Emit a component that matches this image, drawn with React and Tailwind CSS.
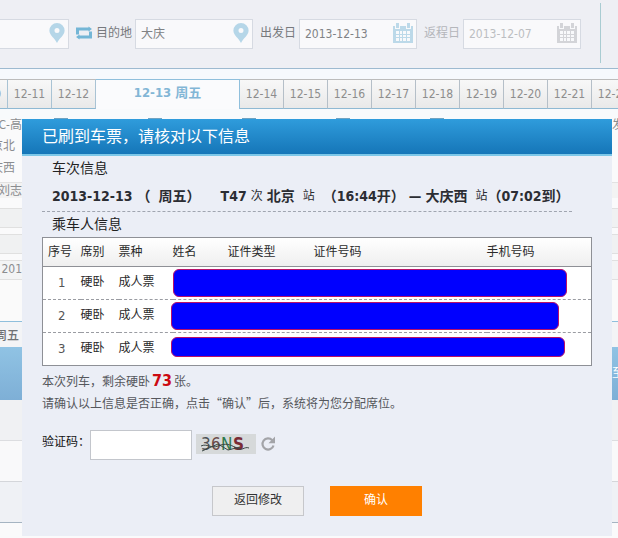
import React from 'react'

const days = ['12-14', '12-15', '12-16', '12-17', '12-18', '12-19', '12-20', '12-21', '12-22']

const passengers = [
  { no: 1, seat: '硬卧', type: '成人票', bar: 'h-7 mr-6' },
  { no: 2, seat: '硬卧', type: '成人票', bar: 'h-7 mr-8 -ml-0.5' },
  { no: 3, seat: '硬卧', type: '成人票', bar: 'h-5 mr-[26px] -ml-0.5 mb-1' },
]

const PinIcon = () => (
  <svg className="mt-[3px] h-5 w-4 shrink-0" viewBox="0 0 16 20">
    <path fill="#b5d6e8" fillRule="evenodd" d="M8 0a7.6 7.6 0 0 0-7.6 7.6C.4 12.500 5.500 15 8 20c2.500-5 7.600-7.500 7.600-12.400A7.600 7.600 0 0 0 8 0zm0 5a2.500 2.500 0 1 1 0 5 2.500 2.500 0 0 1 0-5z" />
  </svg>
)

const CalendarIcon = ({ color }) => (
  <svg className="mt-[3px] h-5 w-5 shrink-0" viewBox="0 0 20 20">
    <path fill={color} d="M0 3h20v17H0zM3 0h3v4H3zM14 0h3v4h-3z" />
    <path fill="#f8f9fb" d="M3 8h14v10H3z" />
    <path fill={color} d="M6 8h1v10H6zM9 8h1v10H9zM13 8h1v10h-1zM3 11h14v1H3zM3 14h14v1H3z" />
    <path fill="#f8f9fb" d="M2 3h1v2h3V3h1v3H2zM13 3h1v2h3V3h1v3h-5z" />
  </svg>
)

const SwapIcon = () => (
  <svg className="h-4 w-4" viewBox="0 0 16 16">
    <path fill="none" stroke="#74b6d6" strokeWidth="3" d="M1.500 9.500V4H13M14.500 6.500V12H3" />
    <path fill="#74b6d6" d="M12.500 1.500L16 4l-3.500 2.500zM3.500 9.500v5L0 12z" />
  </svg>
)

const Field = ({ id, label, value, muted, icon }) => (
  <div className="flex shrink-0 gap-[3px]">
    {label && (
      <label htmlFor={id} className={`mt-1 w-9 shrink-0 whitespace-nowrap leading-5 ${muted ? 'text-[#b4b6bb]' : 'text-[#77797d]'}`}>{label}</label>
    )}
    <div className="flex h-[30px] w-[118px] border border-[#d6dae2] bg-[#f9f9fb] pr-[3px]">
      <input
        id={id}
        aria-label={label ? undefined : '出发地'}
        defaultValue={value}
        className={`min-w-0 flex-1 bg-transparent pl-[5px] outline-none ${muted ? 'text-[#bcbec2]' : 'text-[#808285]'}`}
      />
      {icon}
    </div>
  </div>
)

const SideRow = ({ left, right, className }) => (
  <div className={`flex justify-between ${className}`}>
    <span className="flex w-[22px] justify-end overflow-hidden whitespace-nowrap">{left}</span>
    <span className="w-[6px] overflow-hidden whitespace-nowrap">{right}</span>
  </div>
)

const SearchPage = () => (
  <div>
    {/* Search bar */}
    <form className="flex h-[69px] gap-[7px] overflow-hidden border-b border-[#9dbad0] bg-[#eeeff4] pt-[19px]">
      <div className="-ml-[49px] flex shrink-0">
        <Field id="from" value="" icon={<PinIcon />} />
      </div>
      <div className="flex shrink-0 gap-1">
        <button type="button" aria-label="交换" className="mt-1.5 h-4 w-4">
          <SwapIcon />
        </button>
        <Field id="to" label="目的地" value="大庆" icon={<PinIcon />} />
      </div>
      <Field id="go" label="出发日" value="2013-12-13" icon={<CalendarIcon color="#bcd9e9" />} />
      <Field id="back" label="返程日" value="2013-12-07" muted icon={<CalendarIcon color="#d3d4d8" />} />
      <div className="-mt-4 ml-3 h-[60px] w-px shrink-0 bg-[#a9ccd2]"></div>
    </form>

    {/* Date tabs */}
    <div className="flex overflow-hidden bg-[#f6f9fd] pt-[10px] text-[#8d8d8d]">
      {['12-10', '12-11', '12-12'].map((d) => (
        <button key={d} className={`h-[30px] w-11 shrink-0 border-y border-r border-t-[#bcbcbc] border-r-[#a9c3d4] border-b-[#8fb9d3] bg-linear-to-b from-[#f8f8f8] to-[#e9e9e9] ${d === '12-10' ? '-ml-9' : ''}`}>{d}</button>
      ))}
      <button className="h-[30px] w-36 shrink-0 border-r border-t border-r-[#8fbfdc] border-t-[#8fbfdc] bg-[#fafbfd] pb-1 text-[13px] font-bold text-[#82b6d6]">12-13 周五</button>
      {days.map((d) => (
        <button key={d} className="h-[30px] w-11 shrink-0 border-y border-r border-t-[#bcbcbc] border-r-[#b5bfc8] border-b-[#8fb9d3] bg-linear-to-b from-[#f8f8f8] to-[#e9e9e9]">{d}</button>
      ))}
    </div>

    {/* Filters and train list behind the dialog */}
    <div className="flex h-[10px] items-end gap-20 overflow-hidden bg-[#f8fafc] pl-[54px]">
      {['GC', 'D', 'Z', 'T', 'K'].map((t) => (
        <span key={t} className="h-px w-[14px] shrink-0 bg-[#6fa3c2]"></span>
      ))}
    </div>
    <div className="-mt-1 text-[#8b8d90]">
      <SideRow left="GC-高" right="发" className="h-[21px] leading-5" />
      <SideRow left={<span className="pr-[7px]">北京北</span>} className="h-[22px] leading-5" />
      <SideRow left={<span className="pr-[7px]">大庆西</span>} className="h-[24px] leading-5" />
      <SideRow left="刘志" className="h-4 border-t border-[#e2e2e2] bg-[#f3f3f3] leading-4" />
      <SideRow className="mt-2.5 h-5 border-y border-[#e0e0e0] bg-[#f0f1f2]" />
      <SideRow className="mt-1.5 h-5 border-y border-[#e0e0e0] bg-[#f0f1f2]" />
      <SideRow left="201" className="mt-1.5 h-5 border-y border-[#e0e0e0] bg-[#f3f4f5] leading-4" />
    </div>
    <div className="h-[41px] bg-[#fafafa]"></div>
    <SideRow left={<span className="pr-[3px] font-medium text-[#6f7173]">周五</span>} className="h-[26px] border-t border-[#8fbfdc] bg-[#f3f4f6] leading-7" />
    <SideRow right={<span className="text-white">至</span>} className="h-[53px] bg-linear-to-b from-[#90c3e4] to-[#7eafd6] leading-[53px]" />
    <div className="h-[41px] border-b border-[#dcdde0] bg-[#f0f1f3]"></div>
    <div className="h-[41px] border-b border-[#d4d6da] bg-[#f9f9fa]"></div>
    <div className="h-[41px] border-b border-[#a5b4c2] bg-[#eff1f5]"></div>
    <div className="h-4 bg-[#fafafb]"></div>
  </div>
)

const TrainInfo = () => (
  <section>
    <h2 className="pl-2.5 text-sm leading-6 text-[#222]">车次信息</h2>
    <p className="mr-5 flex h-8 items-center whitespace-nowrap border-b border-dashed border-[#a0a5b0] pl-2.5 text-sm font-bold text-[#2b2d33]">
      <span>2013-12-13</span>
      <span className="ml-1">（</span>
      <span className="ml-2">周五）</span>
      <span className="ml-5">T47</span>
      <span className="mx-1 text-xs font-normal">次</span>
      <span>北京</span>
      <span className="mx-2 text-xs font-normal">站</span>
      <span>（16:44开）</span>
      <span className="mx-1">—</span>
      <span>大庆西</span>
      <span className="ml-2 text-xs font-normal">站</span>
      <span>（07:02到）</span>
    </p>
  </section>
)

const PassengerTable = () => (
  <section>
    <h2 className="pl-2.5 text-sm leading-[25px] text-[#222]">乘车人信息</h2>
    <table className="w-full table-fixed border-collapse border border-[#8e9096] bg-white text-left text-[#2b2b2b]">
      <thead>
        <tr className="h-[29px] border-b border-[#8e9096] bg-linear-to-b from-white to-[#efefef]">
          <th className="w-[38px] pl-[5px] font-normal">序号</th>
          <th className="w-[38px] font-normal">席别</th>
          <th className="w-[54px] font-normal">票种</th>
          <th className="w-[55px] font-normal">姓名</th>
          <th className="w-[86px] font-normal">证件类型</th>
          <th className="w-[173px] font-normal">证件号码</th>
          <th className="font-normal">手机号码</th>
        </tr>
      </thead>
      <tbody>
        {passengers.map((p) => (
          <tr key={p.no} className="h-[33px] border-b border-dashed border-[#9a9ca2] last:border-solid last:border-[#8e9096]">
            <td className="text-center text-[13px] text-[#555]">{p.no}</td>
            <td className="pb-0.5">{p.seat}</td>
            <td className="pb-0.5">{p.type}</td>
            <td colSpan="4">
              <div className={`rounded-md border border-[#b8106a] bg-[#0000ff] ${p.bar}`}></div>
            </td>
          </tr>
        ))}
      </tbody>
    </table>
  </section>
)

const Captcha = () => (
  <div className="mt-4 flex">
    <label htmlFor="captcha" className="w-12 whitespace-nowrap leading-6 text-[#111]">验证码：</label>
    <input id="captcha" className="h-[30px] w-[102px] border border-[#c3c6cc] bg-white px-1 outline-none" />
    <svg className="mt-1 ml-1 h-5 w-[60px]" viewBox="0 0 60 20">
      <rect width="60" height="20" fill="#d6d9da" />
      <g fontFamily="DejaVu Sans Condensed, DejaVu Sans, sans-serif" fontSize="17">
        <text x="5" y="16" fill="#4d5054">3</text>
        <text x="15" y="16" fill="#6b4a48">6</text>
        <text x="25" y="16" fill="#2f7a4c">N</text>
        <text x="37" y="16" fill="#7a2b35" fontWeight="bold">S</text>
      </g>
      <path fill="none" stroke="#3a4644" d="M5 12c6-3 10 3 17 0s12-2 18 2 8-2 13 0M6 17l16-7 10 6 12-3" />
    </svg>
    <button type="button" aria-label="刷新" className="mt-1.5 ml-1 h-4 w-4">
      <svg className="h-4 w-4" viewBox="0 0 16 16">
        <path fill="none" stroke="#a3a4a8" strokeWidth="2.200" d="M12.200 4.200A5.600 5.600 0 1 0 13.500 9.500" />
        <path fill="#a3a4a8" d="M15 .5v6.700H8.500z" />
      </svg>
    </button>
  </div>
)

const ConfirmDialog = () => (
  <div role="dialog" aria-label="已刷到车票" className="bg-[#ebeef6] pb-5">
    <h1 className="h-[37px] border-b-2 border-[#7cc7e8] bg-linear-to-b from-[#2f9cdc] to-[#1576b8] pl-5 text-base leading-[35px] text-white">
      已刷到车票，请核对以下信息
    </h1>
    <div className="px-5">
      <TrainInfo />
      <PassengerTable />
      <div className="mt-1 leading-[22px] text-[#55575c]">
        <p className="h-[22px]">
          本次列车，剩余硬卧<b className="mx-0.5 text-base leading-[22px] text-[#cc0a12]">73</b>张。
        </p>
        <p className="font-['Noto_Sans_CJK_SC',sans-serif]">请确认以上信息是否正确，点击“确认”后，系统将为您分配席位。</p>
      </div>
      <Captcha />
      <div className="mt-[26px] flex justify-center gap-[26px]">
        <button className="h-[30px] w-[92px] border border-[#c6c7cb] bg-[#efeff0] pb-0.5 text-[#333]">返回修改</button>
        <button className="h-[30px] w-[92px] bg-[#ff8000] pb-0.5 text-white">确认</button>
      </div>
    </div>
  </div>
)

const App = () => {
  return (
    <div className="relative min-h-screen overflow-hidden bg-[#fafafb] font-['DejaVu_Sans_Condensed','DejaVu_Sans','Noto_Sans_CJK_SC',sans-serif] text-xs">
      <SearchPage />
      <div className="absolute inset-x-0 top-[119px] pr-[6px] pl-[22px]">
        <ConfirmDialog />
      </div>
    </div>
  )
}

export default App
